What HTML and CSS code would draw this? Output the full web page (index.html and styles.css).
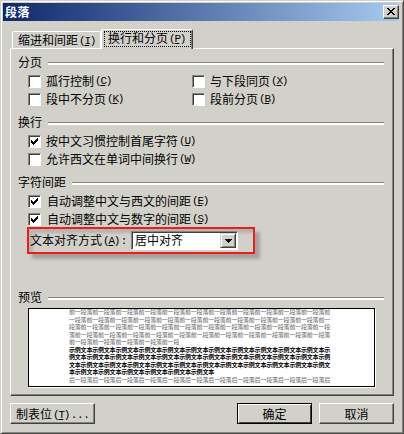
FILE: index.html
```html
<!DOCTYPE html>
<html lang="zh-CN">
<head>
<meta charset="utf-8">
<title>段落</title>
<link rel="stylesheet" href="styles.css">
</head>
<body>
<main class="dialog">
  <header class="titlebar">
    <h1>段落</h1>
    <button class="close" aria-label="关闭"><svg width="8" height="7" viewBox="0 0 8 7" shape-rendering="crispEdges"><path d="M0 0h2v1h1v1h2V1h1V0h2v1H7v1H6v1H5v1h1v1h1v1h1v1H6V6H5V5H3v1H2v1H0V6h1V5h1V4h1V3H2V2H1V1H0z"/></svg></button>
  </header>
  <nav class="tabs">
    <button class="tab">缩进和间距<span class="key">(<u>I</u>)</span></button>
    <button class="tab active"><span class="focus">换行和分页<span class="key">(<u>P</u>)</span></span></button>
  </nav>
  <section class="panel">
    <h2 class="group">分页</h2>
    <div class="checks pair">
      <label class="check"><i class="box"></i>孤行控制<span class="key">(<u>C</u>)</span></label>
      <label class="check"><i class="box"></i>与下段同页<span class="key">(<u>X</u>)</span></label>
      <label class="check"><i class="box"></i>段中不分页<span class="key">(<u>K</u>)</span></label>
      <label class="check"><i class="box"></i>段前分页<span class="key">(<u>B</u>)</span></label>
    </div>
    <h2 class="group">换行</h2>
    <div class="checks">
      <label class="check"><i class="box"><svg width="7" height="7" viewBox="0 0 7 7" shape-rendering="crispEdges"><path d="M0 2h1v1h1v1h1V3h1V2h1V1h1V0h1v3H6v1H5v1H4v1H3v1H2V6H1V5H0z"/></svg></i>按中文习惯控制首尾字符<span class="key">(<u>U</u>)</span></label>
      <label class="check"><i class="box"></i>允许西文在单词中间换行<span class="key">(<u>W</u>)</span></label>
    </div>
    <h2 class="group">字符间距</h2>
    <div class="checks shifted">
      <label class="check"><i class="box"><svg width="7" height="7" viewBox="0 0 7 7" shape-rendering="crispEdges"><path d="M0 2h1v1h1v1h1V3h1V2h1V1h1V0h1v3H6v1H5v1H4v1H3v1H2V6H1V5H0z"/></svg></i>自动调整中文与西文的间距<span class="key">(<u>E</u>)</span></label>
      <label class="check"><i class="box"><svg width="7" height="7" viewBox="0 0 7 7" shape-rendering="crispEdges"><path d="M0 2h1v1h1v1h1V3h1V2h1V1h1V0h1v3H6v1H5v1H4v1H3v1H2V6H1V5H0z"/></svg></i>自动调整中文与数字的间距<span class="key">(<u>S</u>)</span></label>
    </div>
    <div class="align">
      <span class="caption">文本对齐方式<span class="key">(<u>A</u>)<span class="colon">:</span></span></span>
      <div class="select"><span class="value">居中对齐</span><button class="drop" aria-label="展开"><svg width="7" height="4" viewBox="0 0 7 4" shape-rendering="crispEdges"><path d="M0 0h7v1H6v1H5v1H4v1H3V3H2V2H1V1H0z"/></svg></button></div>
    </div>
    <h2 class="group">预览</h2>
    <div class="preview">
      <p>前一段落前一段落前一段落前一段落前一段落前一段落前一段落前一段落前一段落前一段落前一段落前</p>
      <p>一段落前一段落前一段落前一段落前一段落前一段落前一段落前一段落前一段落前一段落前一段落前一</p>
      <p>段落前一段落前一段落前一段落前一段落前一段落前一段落前一段落前一段落前一段落前一段落前一段</p>
      <p>落前一段落前一段落前一段落前一段落前一段落前一段落前一段落前一段落前一段落前一段落前一段落</p>
      <p>前一段落前一段落前一段落前一段落前一段</p>
      <p class="sample">示例文本示例文本示例文本示例文本示例文本示例文本示例文本示例文本示例文本示例文本示例文本示</p>
      <p class="sample">例文本示例文本示例文本示例文本示例文本示例文本示例文本示例文本示例文本示例文本示例文本示例</p>
      <p class="sample">文本示例文本示例文本示例文本示例文本示例文本示例文本示例文本示例文本示例文本示例文本示例文</p>
      <p class="sample">本示例文本示例文本示例文本示例文本示例文本示例文本</p>
      <p>后一段落后一段落后一段落后一段落后一段落后一段落后一段落后一段落后一段落后一段落后一段落后</p>
    </div>
  </section>
  <footer class="actions">
    <button class="btn tabstop">制表位<span class="key">(<u>T</u>)<span class="dots">...</span></span></button>
    <button class="btn ok">确定</button>
    <button class="btn cancel">取消</button>
  </footer>
</main>
</body>
</html>
```
FILE: styles.css
```css
* { box-sizing: border-box; margin: 0; padding: 0; }

body {
  width: 404px;
  height: 434px;
  overflow: hidden;
  background: #d2d1c9;
  color: #000;
  font: 12px/16px "Noto Sans CJK SC", sans-serif;
}

button { font: inherit; color: inherit; border: 0; border-radius: 0; background: #d2d1c9; white-space: nowrap; }
svg { display: block; fill: #000; }

.key { margin-left: 1px; font: 11px/12px "Liberation Mono", monospace; letter-spacing: -1.7px; vertical-align: 1px; }
.key u { margin: 0 .5px; text-underline-offset: 1px; text-decoration-thickness: 1px; }
.colon { margin-left: 2px; }
.dots { margin-left: 2px; letter-spacing: -0.4px; }

.dialog {
  width: 404px;
  height: 434px;
  display: flex;
  flex-direction: column;
  border: 1px solid;
  border-color: #d2d1c9 #4a4a48 #4a4a48 #d2d1c9;
  box-shadow: inset 1px 1px #fff, inset -1px -1px #85847f;
  padding: 2px 4px 0 2px;
}

.titlebar {
  display: flex;
  align-items: center;
  justify-content: space-between;
  height: 18px;
  padding: 0 0 0 2px;
  background: linear-gradient(90deg, #0f276c, #a6caf0);
  color: #fff;
}
.titlebar h1 { font-size: 12px; font-weight: 700; line-height: 16px; letter-spacing: 0.5px; padding-bottom: 1px; }

.close {
  display: grid;
  place-items: center;
  width: 16px;
  height: 14px;
  border: 1px solid;
  border-color: #fff #404040 #404040 #fff;
  box-shadow: inset -1px -1px #85847f;
  padding: 0 1px 1px 0;
}

.tabs { display: flex; align-items: flex-end; height: 27px; padding-left: 9px; }
.tab {
  width: 89px;
  height: 17px;
  padding-left: 5px;
  text-align: left;
  border: 1px solid #fff;
  border-width: 1px 1px 0 1px;
  border-radius: 2px 2px 0 0;
}
.tab.active {
  z-index: 1;
  width: 92px;
  height: 20px;
  margin-bottom: -1px;
  padding: 1px 0 2px 2px;
  border-right-color: #404040;
  box-shadow: inset -1px 0 #85847f;
}
.focus { display: block; width: 87px; height: 16px; line-height: 11px; padding-left: 3px; border: 1px dotted #000; }
.focus .key { line-height: 10px; }

.panel {
  width: 384px;
  height: 348px;
  margin-left: 7px;
  padding: 5px 8px 0 7px;
  border: 1px solid;
  border-color: #fff #404040 #404040 #fff;
  box-shadow: inset -1px -1px #85847f;
}

.group { display: flex; align-items: center; gap: 6px; width: 366px; height: 16px; font-size: 12px; font-weight: 400; }
.group::after { content: ""; flex: 1; height: 2px; margin-top: 2px; border-top: 1px solid #85847f; background: #fff; }

.checks { display: grid; grid-auto-rows: 18px; padding: 3px 0 5px 10px; }
.pair { grid-template-columns: 164px auto; }
.check { display: flex; align-items: center; padding-bottom: 2px; white-space: nowrap; }
.check .key { margin-bottom: 1px; }
.box {
  display: grid;
  place-items: center;
  width: 13px;
  height: 13px;
  margin: 1px 5px 0 0;
  background: #fff;
  border: 1px solid;
  border-color: #85847f #fff #fff #85847f;
  box-shadow: inset 1px 1px #404040;
}
.shifted { padding-bottom: 0; }
.shifted .box { margin-right: 6px; }

.align {
  display: flex;
  align-items: center;
  width: 228px;
  height: 27px;
  margin: -2px 0 35px 9px;
  border: 2px solid #f01c1c;
  box-shadow: 5px 5px 3px rgba(0, 0, 0, .22), inset 4px 4px 3px rgba(0, 0, 0, .14);
}
.caption { width: 102px; padding: 0 0 2px 1px; white-space: nowrap; }
.select {
  display: flex;
  justify-content: space-between;
  width: 107px;
  height: 19px;
  padding: 1px;
  background: #fff;
  border: 1px solid;
  border-color: #85847f #fff #fff #85847f;
  box-shadow: inset 1px 1px #404040;
}
.value { padding-left: 2px; line-height: 14px; }
.drop {
  display: grid;
  place-items: center;
  width: 16px;
  height: 15px;
  border: 1px solid;
  border-color: #d2d1c9 #404040 #404040 #d2d1c9;
  box-shadow: inset 1px 1px #fff, inset -1px -1px #85847f;
}

.preview {
  width: 347px;
  height: 79px;
  margin: 3px 0 0 10px;
  padding-left: 40px;
  overflow: hidden;
  background: #fff;
  border: 1px solid #000;
  box-shadow: 1px 1px #fff;
}
.preview p { height: 7.55px; font-size: 6px; line-height: 6px; letter-spacing: -0.2px; white-space: nowrap; color: #666; }
.preview .sample { color: #000; font-weight: 700; }

.actions { display: flex; height: 22px; margin: 7px 0 0 7px; }
.btn {
  width: 75px;
  height: 21px;
  border: 1px solid;
  border-color: #fff #404040 #404040 #fff;
  box-shadow: inset -1px -1px #85847f;
}
.tabstop { width: 85px; margin-right: 142px; padding-left: 5px; text-align: left; }
.ok { border-color: #000; box-shadow: inset 1px 1px #fff, inset -1px -1px #404040; margin-right: 7px; }
```
